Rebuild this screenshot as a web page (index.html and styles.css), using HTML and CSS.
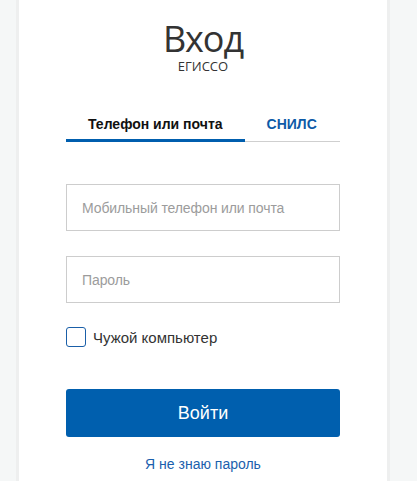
FILE: index.html
```html
<!DOCTYPE html>
<html lang="ru">
<head>
<meta charset="utf-8">
<title>Вход</title>
<link rel="stylesheet" href="styles.css">
</head>
<body>
<div class="page">
  <div class="card">
    <div class="head">
      <h1 class="title">Вход</h1>
      <div class="subtitle">ЕГИССО</div>
    </div>
    <div class="tabs">
      <div class="tab active">Телефон или почта</div>
      <div class="tab">СНИЛС</div>
      <div class="tab-rest"></div>
    </div>
    <form class="form">
      <input class="field" type="text" placeholder="Мобильный телефон или почта">
      <input class="field" type="password" placeholder="Пароль">
      <label class="check">
        <span class="box"></span>
        <span class="check-label">Чужой компьютер</span>
      </label>
      <button class="btn" type="button">Войти</button>
      <a class="link" href="#">Я не знаю пароль</a>
    </form>
  </div>
</div>
</body>
</html>
```
FILE: styles.css
```css
html, body {
  margin: 0;
  padding: 0;
}
body {
  background: #f5f7f7;
  font-family: "Liberation Sans", Arial, sans-serif;
  height: 481px;
  overflow: hidden;
}
.page {
  padding-left: 16px;
}
.card {
  box-sizing: border-box;
  width: 374px;
  height: 481px;
  background: #fff;
  border-left: 3px solid #eeefef;
  border-right: 3px solid #eeefef;
  padding: 24px 47px 0;
}
.head {
  text-align: center;
}
.title {
  margin: 0;
  font-family: "Open Sans", sans-serif;
  font-weight: 400;
  font-size: 36px;
  line-height: 30px;
  color: #333;
  letter-spacing: -1.1px;
}
.subtitle {
  font-family: "Open Sans", sans-serif;
  font-size: 13px;
  line-height: 11px;
  color: #333;
  margin-top: 7px;
}
.tabs {
  display: flex;
  margin-top: 44px;
}
.tab {
  padding: 0 22px 9px;
  font-size: 14px;
  line-height: 16px;
  font-weight: 700;
  color: #0d5aa7;
  white-space: nowrap;
  border-bottom: 1px solid #cfcfcf;
}
.tab.active {
  color: #111;
  border-bottom: 3px solid #005eae;
  padding-bottom: 7px;
}
.tab-rest {
  flex: 1;
  border-bottom: 1px solid #cfcfcf;
}
.form {
  display: flex;
  flex-direction: column;
  margin-top: 42px;
}
.field {
  height: 47px;
  box-sizing: border-box;
  border: 1px solid #cdcdcd;
  padding: 0 15px;
  font-family: "Liberation Sans", Arial, sans-serif;
  font-size: 14px;
  letter-spacing: -0.1px;
  color: #333;
  margin: 0 0 25px;
  outline: none;
}
.field::placeholder {
  color: #9c9c9c;
}
.check {
  display: flex;
  align-items: center;
  gap: 7px;
  margin-top: -1px;
}
.box {
  width: 20px;
  height: 20px;
  box-sizing: border-box;
  border: 1.5px solid #1a5fa8;
  border-radius: 3px;
}
.check-label {
  font-size: 15px;
  color: #333;
}
.btn {
  margin-top: 42px;
  height: 48px;
  border: none;
  border-radius: 3px;
  background: #005fae;
  color: #fff;
  font-family: "Liberation Sans", Arial, sans-serif;
  font-size: 18px;
}
.link {
  margin-top: 19px;
  align-self: center;
  font-size: 14px;
  color: #1b5fad;
  text-decoration: none;
}
```
